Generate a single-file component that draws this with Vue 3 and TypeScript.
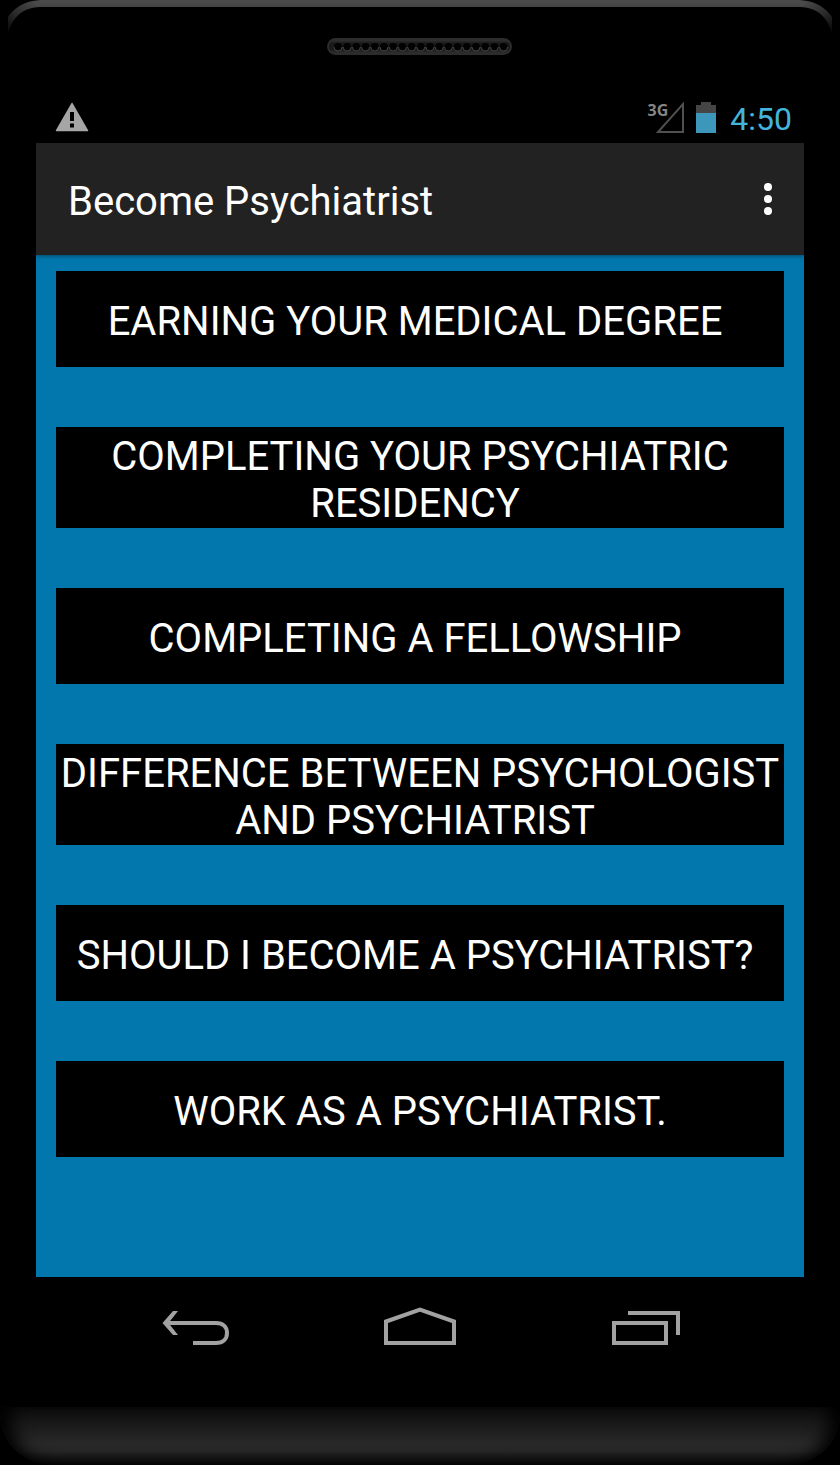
<script setup lang="ts">
interface Topic {
  id: number
  label: string
}

const title = 'Become Psychiatrist'
const time = '4:50'

const topics: Topic[] = [
  { id: 1, label: 'EARNING YOUR MEDICAL DEGREE\u00a0' },
  { id: 2, label: 'COMPLETING YOUR PSYCHIATRIC RESIDENCY\u00a0' },
  { id: 3, label: 'COMPLETING A FELLOWSHIP\u00a0' },
  { id: 4, label: 'DIFFERENCE BETWEEN PSYCHOLOGIST AND PSYCHIATRIST\u00a0' },
  { id: 5, label: 'SHOULD I BECOME A PSYCHIATRIST?\u00a0' },
  { id: 6, label: 'WORK AS A PSYCHIATRIST.' },
]

const speakerHoles: number[] = Array.from({ length: 19 }, (_, i) => 11 + i * 9.2)
</script>

<template>
  <div class="phone">
    <div class="top-case">
      <svg class="edge" width="32" height="40" viewBox="0 0 32 40" aria-hidden="true">
        <defs>
          <linearGradient id="edgeLeft" x1="0" y1="36" x2="24" y2="0" gradientUnits="userSpaceOnUse">
            <stop offset="0" stop-color="#000" />
            <stop offset="0.55" stop-color="#2c2c2c" />
            <stop offset="1" stop-color="#494949" />
          </linearGradient>
        </defs>
        <path d="M32 0C16 1 6 8 0 17V38C1 21 13 7 32 7Z" fill="url(#edgeLeft)" />
      </svg>
      <div class="rim"></div>
      <svg class="edge" width="32" height="40" viewBox="0 0 32 40" aria-hidden="true">
        <defs>
          <linearGradient id="edgeRight" x1="32" y1="36" x2="8" y2="0" gradientUnits="userSpaceOnUse">
            <stop offset="0" stop-color="#000" />
            <stop offset="0.55" stop-color="#2c2c2c" />
            <stop offset="1" stop-color="#494949" />
          </linearGradient>
        </defs>
        <path d="M0 0C16 1 26 8 32 17V38C31 21 19 7 0 7Z" fill="url(#edgeRight)" />
      </svg>
    </div>

    <div class="speaker">
      <svg width="186" height="17" viewBox="0 0 186 17" aria-hidden="true">
        <defs>
          <linearGradient id="grille" x1="0" y1="0" x2="0" y2="1">
            <stop offset="0" stop-color="#383838" />
            <stop offset="0.3" stop-color="#191919" />
            <stop offset="0.7" stop-color="#1b1b1b" />
            <stop offset="1" stop-color="#333" />
          </linearGradient>
        </defs>
        <rect x="1" y="1" width="183" height="15" rx="7.5" fill="url(#grille)" stroke="#2c2c2c" stroke-width="2" />
        <g v-for="x in speakerHoles" :key="x">
          <circle :cx="x" cy="9" r="4" fill="#020202" />
          <path :d="`M${x - 4} 9a4 4 0 0 0 8 0`" fill="none" stroke="#444" />
        </g>
      </svg>
    </div>

    <div class="screen">
      <div class="status-bar">
        <svg class="warning" width="34" height="30" viewBox="0 0 34 30" role="img" aria-label="Warning">
          <path d="M17 1.500L32.500 28.500H1.500Z" fill="#a6a6a6" stroke="#a6a6a6" stroke-width="1.500" stroke-linejoin="round" />
          <path d="M15 10h4v9h-4zM15 21.500h4v4h-4z" fill="#000" />
        </svg>
        <div class="network">
          <span class="network-type">3G</span>
          <svg width="29" height="33" viewBox="0 0 29 33" aria-hidden="true">
            <path d="M27 3V31H2Z" fill="none" stroke="#505050" stroke-width="2" />
          </svg>
        </div>
        <svg class="battery" width="20" height="31" viewBox="0 0 20 31" role="img" aria-label="Battery">
          <path d="M0 3H5V0H15V3H20V11H0Z" fill="#454545" />
          <path d="M0 11H20V31H0Z" fill="#3c97bb" />
        </svg>
        <span class="clock">{{ time }}</span>
      </div>

      <header class="action-bar">
        <h1 class="title">{{ title }}</h1>
        <button class="overflow" type="button" aria-label="More options">
          <svg width="8" height="32" viewBox="0 0 8 32" aria-hidden="true">
            <circle cx="4" cy="4" r="4" fill="#fff" />
            <circle cx="4" cy="16" r="4" fill="#fff" />
            <circle cx="4" cy="28" r="4" fill="#fff" />
          </svg>
        </button>
      </header>

      <main class="content">
        <button v-for="topic in topics" :key="topic.id" class="topic" type="button">{{ topic.label }}</button>
      </main>

      <nav class="nav-bar">
        <button class="nav-button" type="button" aria-label="Back">
          <svg width="72" height="40" viewBox="0 0 72 40" aria-hidden="true">
            <path d="M10 18H58C65 18 69 22 69 28S65 38 58 38H35" fill="none" stroke="#a2a2a2" stroke-width="4" />
            <path d="M15 6H20L10.500 18L20 30H15L4.500 18Z" fill="#a2a2a2" />
          </svg>
        </button>
        <button class="nav-button" type="button" aria-label="Home">
          <svg width="72" height="40" viewBox="0 0 72 40" aria-hidden="true">
            <path d="M2 38V16.500L36 4.500L70 16.500V38Z" fill="none" stroke="#a2a2a2" stroke-width="4" />
          </svg>
        </button>
        <button class="nav-button" type="button" aria-label="Recent apps">
          <svg width="72" height="40" viewBox="0 0 72 40" fill="none" stroke="#a2a2a2" stroke-width="4" aria-hidden="true">
            <path d="M4 18H56V38H4Z" />
            <path d="M18 8H68V30" />
          </svg>
        </button>
      </nav>
    </div>

    <div class="chin"></div>
  </div>
</template>

<style>
body {
  margin: 0;
  background: #000;
}
</style>

<style scoped>
.phone {
  display: flex;
  flex-direction: column;
  box-sizing: border-box;
  min-height: 100vh;
  background: #000;
  color: #fff;
  font-family: Roboto, "Liberation Sans", sans-serif;
}

button {
  margin: 0;
  padding: 0;
  border: 0;
  border-radius: 0;
  background: none;
  color: inherit;
  font: inherit;
}

svg {
  display: block;
  flex: none;
}

.top-case {
  display: flex;
  align-items: flex-start;
  padding: 0 8px;
  height: 38px;
}

.rim {
  flex: 1;
  height: 7px;
  background: linear-gradient(#4c4c4c, #444);
}

.speaker {
  display: flex;
  justify-content: center;
  padding-bottom: 40px;
}

.screen {
  display: flex;
  flex: 1;
  flex-direction: column;
  margin: 0 36px;
}

.status-bar {
  display: flex;
  align-items: center;
  box-sizing: border-box;
  height: 48px;
  padding: 0 12px 4px 19px;
}

.warning {
  margin-right: auto;
}

.network {
  display: flex;
  align-items: flex-start;
  margin-right: 11px;
}

.network-type {
  margin-right: -12px;
  color: #858585;
  font-family: "Noto Sans", sans-serif;
  font-size: 16px;
  font-weight: 700;
  line-height: 18px;
}

.battery {
  margin-right: 14px;
}

.clock {
  padding-top: 4px;
  color: #43b4dc;
  font-size: 32px;
  line-height: 44px;
}

.action-bar {
  display: flex;
  z-index: 1;
  align-items: center;
  justify-content: space-between;
  height: 112px;
  padding: 0 32px;
  background: #222;
  box-shadow: 0 1px 4px rgba(0, 40, 50, 0.6);
  clip-path: inset(0 0 -8px 0);
}

.title {
  margin: 6px 0 0;
  font-size: 40px;
  font-weight: 400;
  line-height: 48px;
}

.overflow {
  display: flex;
}

.content {
  display: flex;
  flex: 1;
  flex-direction: column;
  gap: 60px;
  padding: 16px 20px;
  background: #0277ad;
}

.topic {
  min-height: 96px;
  padding: 6px 0 1px;
  background: #000;
  font-size: 40px;
  line-height: 47px;
  text-align: center;
}

.nav-bar {
  display: flex;
  align-items: flex-start;
  justify-content: center;
  gap: 154px;
  padding: 28px 0 62px;
}

.nav-button {
  display: flex;
}

.chin {
  height: 58px;
  border-radius: 0 0 52px 52px;
  background: linear-gradient(#0c0c0c, #282828 62%, #262626 76%, #050505);
  box-shadow: inset 20px 0 18px -10px #000, inset -20px 0 18px -10px #000;
}
</style>
